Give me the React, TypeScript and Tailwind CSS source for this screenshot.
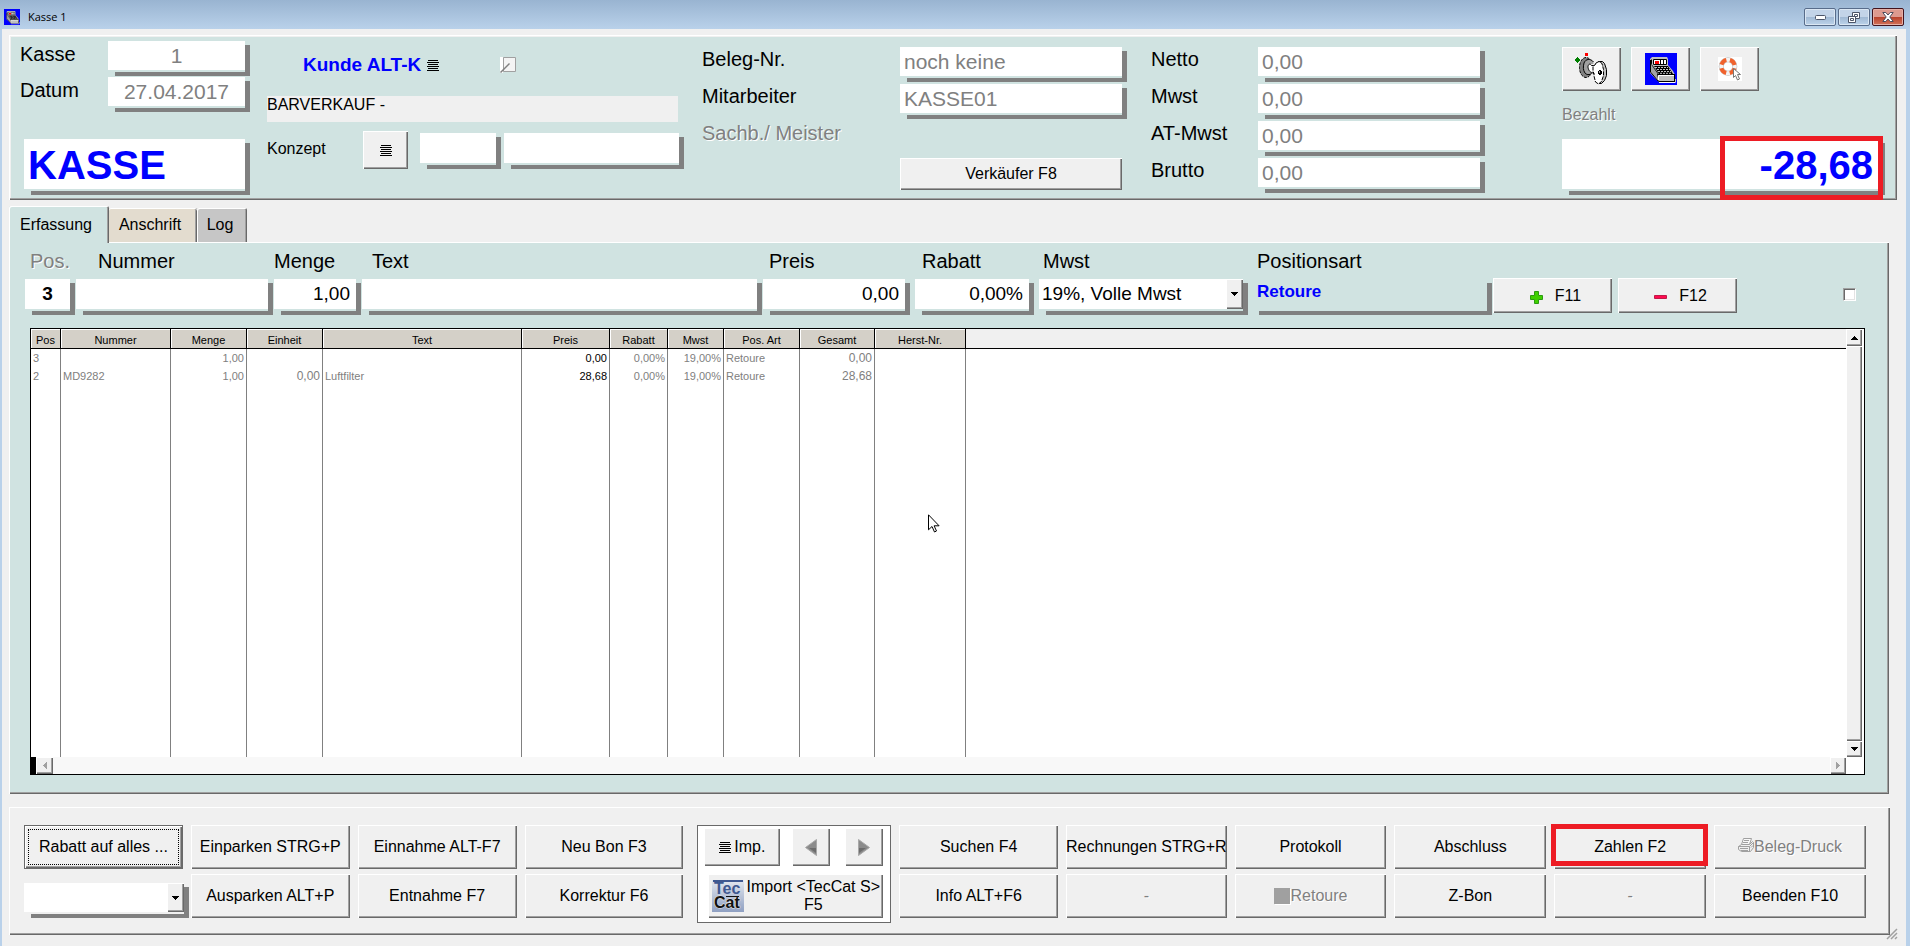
import { useState, type ButtonHTMLAttributes, type InputHTMLAttributes, type ReactNode } from 'react';
import clsx from 'clsx';

const BEVEL = 'shadow-[inset_1px_1px_#fff,inset_-1px_-1px_#696969,inset_-2px_-2px_#a0a0a0]';
const DISABLED_TEXT = 'text-[#808080] [text-shadow:1px_1px_#fff]';

function BevelButton({ className, children, disabled, ...rest }: ButtonHTMLAttributes<HTMLButtonElement>) {
    return (
        <button
            type="button"
            disabled={disabled}
            className={clsx(
                'flex items-center justify-center bg-[#f0f0f0] whitespace-nowrap',
                BEVEL,
                disabled && DISABLED_TEXT,
                className,
            )}
            {...rest}
        >
            {children}
        </button>
    );
}

// White box with the thick grey L-shaped shadow at its right and bottom edge
function ShadowBox({ className, children }: { className?: string; children: ReactNode }) {
    return (
        <div className={clsx('grid', className)}>
            <span className="col-start-1 row-start-1 ml-[7px] mt-1 border-r-[5px] border-b-4 border-[#808080]" />
            <div className="col-start-1 row-start-1 mr-[5px] mb-1.5 grid min-w-0">{children}</div>
        </div>
    );
}

interface FieldProps extends InputHTMLAttributes<HTMLInputElement> {
    boxClass?: string;
}

function Field({ boxClass, className, ...rest }: FieldProps) {
    return (
        <ShadowBox className={boxClass}>
            <input className={clsx('w-full min-w-0 leading-none outline-none', className)} {...rest} />
        </ShadowBox>
    );
}

interface DropDownProps {
    id: string;
    label?: string;
    value: string;
    options: string[];
    onChange: (value: string) => void;
    boxClass?: string;
}

function DropDown({ id, label, value, options, onChange, boxClass }: DropDownProps) {
    return (
        <ShadowBox className={boxClass}>
            <select
                id={id}
                aria-label={label}
                value={value}
                onChange={(e) => onChange(e.target.value)}
                className="col-start-1 row-start-1 w-full appearance-none bg-white pl-[3px] text-[19px] outline-none"
            >
                {options.map((option) => (
                    <option key={option}>{option}</option>
                ))}
            </select>
            <span
                className={clsx(
                    'pointer-events-none col-start-1 row-start-1 flex w-[17px] items-center justify-center justify-self-end bg-[#f0f0f0]',
                    BEVEL,
                )}
            >
                <Triangle dir="down" />
            </span>
        </ShadowBox>
    );
}

/* ---------- icons ---------- */

function Triangle({ dir, className = 'text-black' }: { dir: 'up' | 'down' | 'left' | 'right'; className?: string }) {
    const paths = {
        up: 'M3 0h1v1h1v1h1v1h1v1H0V3h1V2h1V1h1z',
        down: 'M0 0h7v1H6v1H5v1H4v1H3V3H2V2H1V1H0z',
        left: 'M4 0v7H3V6H2V5H1V4H0V3h1V2h1V1h1V0z',
        right: 'M0 0v7h1V6h1V5h1V4h1V3H3V2H2V1H1V0z',
    };
    const vertical = dir === 'up' || dir === 'down';
    return (
        <svg width={vertical ? 7 : 4} height={vertical ? 4 : 7} shapeRendering="crispEdges" className={className}>
            <path d={paths[dir]} fill="currentColor" />
        </svg>
    );
}

function LinesIcon() {
    return (
        <svg width="12" height="11" shapeRendering="crispEdges">
            <path d="M1 0h10v1H1zM0 2h12v1H0zM1 4h10v1H1zM0 6h12v1H0zM1 8h10v1H1zM0 10h12v1H0z" />
        </svg>
    );
}

function RegisterIcon({ size = 32 }: { size?: number }) {
    return (
        <svg width={size} height={size} viewBox="0 0 32 32">
            <path fill="#0000ff" d="M0 0h32v32H0z" />
            <path fill="#c0c0c0" d="M5 6l2-2h15l1 2v6l5 6 2 4v7H14l-9-9z" />
            <path fill="none" stroke="#000" d="M5.500 7v12l8 9.500M6.500 6.500v5l7 10" />
            <path fill="#808080" d="M6 10l7 11v6l-7-8z" opacity=".45" />
            <path fill="#fff" stroke="#000" d="M8.500 6.500h13v5h-13z" />
            <path fill="#f00" d="M10 8h4v3h-4z" />
            <path fill="none" stroke="#000" d="M15.500 7v4M18.500 7v4" />
            <path fill="#000" d="M9 13h14l5 8H14z" />
            <path
                fill="none"
                stroke="#c0c0c0"
                strokeDasharray="2 1"
                d="M10 14.500h13M12 16.500h13M13 18.500h13M15 20.300h12"
            />
            <path fill="#000" d="M12 21h18v8H14z" />
            <path fill="#c0c0c0" d="M13 22h16v6H14z" />
            <path fill="none" stroke="#fff" d="M13.500 27v-4.500H29M14 29.500h16.500" />
            <path fill="#c0c0c0" d="M30 26h1v3h-1z" />
        </svg>
    );
}

function PhoneIcon() {
    return (
        <svg width="33" height="32" viewBox="0 0 33 32">
            <path fill="#008000" d="M2 4h1v1h1v1h1v2H4v1H3v1H2V9H1V8H0V6h1V5h1z" />
            <path fill="#f00" d="M10 0h3v3h-3z" />
            <ellipse cx="11" cy="14.500" rx="6.500" ry="10" fill="#808080" stroke="#000" strokeDasharray="3 1" />
            <path fill="#a0a0a0" stroke="#000" d="M18.500 9c-3-4-8-3-9.500 1-1 4-1 7 1 10 2 2.500 6 2 8-1" />
            <path fill="#f0f0f0" d="M15 11h8v11h-5l-4-5z" />
            <path fill="#fff" stroke="#000" d="M19.500 12.500h-3c-1-2-3-2-3.500 1 0 3 2 6 4 6l2.500 1.500" />
            <path fill="#c0c0c0" stroke="#000" d="M23.500 8.500h4l2 2 2 6v6l-2 5-3 3h-3z" />
            <path fill="#fff" stroke="#000" strokeDasharray="4 1" d="M21 10l3-1.500 3 2 1.500 6v6l-2 6-3 2.500-3-2-1.500-6v-3l-1-1v-6l2-1z" />
            <path fill="#000" d="M24 17h2v1h1v3h-1v1h-2v-1h-1v-3h1z" />
            <path fill="#a0a0a0" d="M24 18h1v2h-1z" />
        </svg>
    );
}

function HelpIcon() {
    return (
        <svg width="24" height="24" viewBox="0 0 24 24">
            <path fill="#fff" d="M0 0h24v24H0z" />
            <circle cx="10" cy="9.500" r="6.800" fill="none" stroke="#b9b9b9" strokeWidth="5" />
            <circle cx="10" cy="9.500" r="6.800" fill="none" stroke="#f4f4f4" strokeWidth="4" />
            <circle
                cx="10"
                cy="9.500"
                r="6.800"
                fill="none"
                stroke="#f0622d"
                strokeWidth="4"
                strokeDasharray="7 3.680"
                strokeDashoffset="-1.800"
            />
            <path fill="#fff" stroke="#777" d="M15.500 11.500v9l2-2 2 4.500 2-1-2-4.500h3z" />
        </svg>
    );
}

function PrinterIcon() {
    return (
        <svg width="16" height="15" viewBox="0 0 16 15" fill="none" stroke="#a0a0a0" className="mb-1">
            <path fill="#f8f8f8" d="M3.500 6.500l2-6h8l-2 6z" />
            <path d="M6 2.500h5M5 4.500h5" />
            <path fill="#f0f0f0" d="M.5 8.500l3-2h8l3-3 1 1v5l-3 4H3.500l-3-2z" />
            <path d="M.5 8.500h11v5M11.500 8.500l4-4M2 10.500h8M3 12.500h7M13 9.500l2-2" />
        </svg>
    );
}

function TecCatLogo() {
    return (
        <svg width="32" height="32" viewBox="0 0 32 32" className="shrink-0">
            <defs>
                <linearGradient id="teccat" x1="0" y1="0" x2="0" y2="1">
                    <stop offset="0" stopColor="#e4e8ef" />
                    <stop offset="1" stopColor="#8fa0c2" />
                </linearGradient>
            </defs>
            <path fill="url(#teccat)" d="M0 0h32v32H0z" />
            <path fill="#3f5890" d="M1 0h30v2H1z" />
            <g fontFamily="Liberation Sans" fontWeight="bold" fontSize="16">
                <text x="2" y="14" fill="#3f5890">Tec</text>
                <text x="2" y="28" fill="#111" stroke="#e8e8e8" strokeWidth="1" paintOrder="stroke">Cat</text>
            </g>
            <path fill="#111" d="M14 16h13v1H14z" />
        </svg>
    );
}

function ArrowIcon({ dir }: { dir: 'left' | 'right' }) {
    return (
        <svg width="12" height="17" viewBox="0 0 12 17">
            <path
                fill="#8b8b8b"
                stroke="#a8a8a8"
                d={dir === 'left' ? 'M11.500 .5v16L.5 8.500z' : 'M.5 .5v16l11-8z'}
            />
            <path fill="#6c6c6c" d={dir === 'left' ? 'M11 9v5L4 9z' : 'M1 9v5l7-5z'} />
        </svg>
    );
}

/* ---------- window parts ---------- */

function TitleBar() {
    const glass =
        'flex h-[18px] w-8 items-center justify-center rounded-xs border border-[#586c8a] bg-[linear-gradient(#c3d4e8_50%,#9fb8d3_50%,#bdd3ea)] shadow-[inset_0_0_0_1px_#dbe7f3]';
    return (
        <header className="flex h-[29px] items-center bg-linear-to-b from-[#99b4d1] to-[#b9d1ea] pt-[5px] pr-1.5 pl-1">
            <RegisterIcon size={16} />
            <h1 className="ml-2 font-['Open_Sans',sans-serif] text-[11px]">Kasse 1</h1>
            <div className="ml-auto flex gap-0.5">
                <button type="button" aria-label="Minimieren" className={glass}>
                    <svg width="11" height="5">
                        <rect x=".5" y=".5" width="10" height="4" rx="1" fill="#fff" stroke="#4c5568" />
                    </svg>
                </button>
                <button type="button" aria-label="Verkleinern" className={glass}>
                    <svg width="12" height="11" fill="none">
                        <path fill="#fff" stroke="#4c5568" d="M4.500 .5h7v6h-7z" />
                        <path stroke="#4c5568" d="M6.500 2.500h3v2h-3z" />
                        <path fill="#fff" stroke="#4c5568" d="M.5 4.500h7v6h-7z" />
                        <path stroke="#4c5568" d="M2.500 6.500h3v2h-3z" />
                    </svg>
                </button>
                <button
                    type="button"
                    aria-label="Schließen"
                    className="flex h-[18px] w-8 items-center justify-center rounded-xs border border-[#43141d] bg-[linear-gradient(#dd9a8f_50%,#b8402a_50%,#d2735a)] shadow-[inset_0_0_0_1px_#e6b0a6]"
                >
                    <svg width="12" height="10" viewBox="0 0 12 10">
                        <path
                            fill="#fff"
                            stroke="#4c4c5c"
                            d="M.8 .5h3L6 3 8.200 .5h3L7.800 5l3.400 4.500h-3L6 7 3.800 9.500h-3L4.200 5z"
                        />
                    </svg>
                </button>
            </div>
        </header>
    );
}

const SUMS = [
    { id: 'netto', label: 'Netto' },
    { id: 'mwst-summe', label: 'Mwst' },
    { id: 'at-mwst', label: 'AT-Mwst' },
    { id: 'brutto', label: 'Brutto' },
];

const HEAD_LABEL = 'text-[20px] leading-[24px] whitespace-nowrap';
const HEAD_FIELD = 'bg-white text-[21px] text-[#808080]';
const BIG_FIELD = 'bg-white pt-0.5 text-[40px] font-bold text-[#0000ff]';

function HeadPanel() {
    return (
        <section className="flex items-start bg-[#d0e3e1] pt-1.5 pr-3 pb-[5px] pl-[11px] shadow-[inset_1px_1px_#fff,inset_-1px_-1px_#696969,inset_-2px_-2px_#a0a0a0,inset_2px_2px_#f0f0f0]">
            <div className="w-[230px] shrink-0">
                <div className="grid grid-cols-[88px_142px] gap-y-px">
                    <label htmlFor="kasse" className="text-[20px] leading-[27px]">Kasse</label>
                    <Field id="kasse" readOnly value="1" boxClass="h-[35px]" className={clsx(HEAD_FIELD, 'text-center')} />
                    <label htmlFor="datum" className="text-[20px] leading-[27px]">Datum</label>
                    <Field id="datum" readOnly value="27.04.2017" boxClass="h-[35px]" className={clsx(HEAD_FIELD, 'text-center')} />
                </div>
                <Field
                    aria-label="Modus"
                    readOnly
                    value="KASSE"
                    boxClass="mt-[27px] ml-1 h-14"
                    className={clsx(BIG_FIELD, 'pl-1')}
                />
            </div>

            <div className="ml-[17px] w-[417px] shrink-0 pt-[7px]">
                <div className="flex h-[34px] items-center pl-9">
                    <button type="button" className="flex items-center gap-1.5 text-[19px] font-bold text-[#0000ff]">
                        Kunde ALT-K
                        <span className="text-black"><LinesIcon /></span>
                    </button>
                    <button type="button" aria-label="Kunde bearbeiten" className="ml-[61px]">
                        <svg width="16" height="16">
                            <path fill="#fff" d="M0 0h3v16H0z" />
                            <path fill="#f4f4f4" stroke="#a0a0a0" d="M3.500 .5h12v14h-12z" />
                            <path stroke="#808080" strokeWidth="1.500" d="M.5 15.500l9-9" />
                        </svg>
                    </button>
                </div>
                <p className="mt-[14px] mr-1.5 h-[26px] bg-[#f0f0f0] text-[16px] leading-[18px]">BARVERKAUF -</p>
                <div className="mt-[9px] flex h-[38px] items-center">
                    <label htmlFor="konzept" className="w-24 pb-0.5 text-[16px]">Konzept</label>
                    <BevelButton aria-label="Konzept wählen" className="h-[38px] w-[45px]">
                        <LinesIcon />
                    </BevelButton>
                    <Field id="konzept" boxClass="ml-3 h-9 w-[81px] self-end" className="bg-white" />
                    <Field aria-label="Konzept Text" boxClass="ml-[3px] h-9 w-[180px] self-end" className="bg-white" />
                </div>
            </div>

            <div className="ml-[18px] grid shrink-0 grid-cols-[198px_227px] grid-rows-[35px_35px_35px_35px] gap-y-0.5 pt-1.5">
                <label htmlFor="beleg" className={HEAD_LABEL}>Beleg-Nr.</label>
                <Field id="beleg" readOnly value="noch keine" className={clsx(HEAD_FIELD, 'pl-1')} />
                <label htmlFor="mitarbeiter" className={HEAD_LABEL}>Mitarbeiter</label>
                <Field id="mitarbeiter" readOnly value="KASSE01" className={clsx(HEAD_FIELD, 'pl-1')} />
                <span className={clsx(HEAD_LABEL, DISABLED_TEXT)}>Sachb./ Meister</span>
                <BevelButton className="col-start-2 row-start-4 mr-[5px] h-8 text-[16px]">Verkäufer F8</BevelButton>
            </div>

            <div className="ml-6 grid shrink-0 grid-cols-[107px_227px] grid-rows-[35px_35px_35px_35px] gap-y-0.5 pt-1.5">
                {SUMS.map(({ id, label }) => (
                    <div key={id} className="contents">
                        <label htmlFor={id} className={HEAD_LABEL}>{label}</label>
                        <Field id={id} readOnly value="0,00" className={clsx(HEAD_FIELD, 'pl-1')} />
                    </div>
                ))}
            </div>

            <div className="ml-auto w-[323px] shrink-0 pt-1.5">
                <div className="flex gap-2.5">
                    <BevelButton aria-label="Telefon" className="h-11 w-[59px]"><PhoneIcon /></BevelButton>
                    <BevelButton aria-label="Kassenlade" className="h-11 w-[59px]"><RegisterIcon /></BevelButton>
                    <BevelButton aria-label="Hilfe" className="h-11 w-[59px]"><HelpIcon /></BevelButton>
                </div>
                <label htmlFor="bezahlt" className={clsx('mt-3 block h-9 text-[16px] leading-6', DISABLED_TEXT)}>
                    Bezahlt
                </label>
                <div className="relative">
                    <Field
                        id="bezahlt"
                        readOnly
                        value="-28,68"
                        boxClass="h-14"
                        className={clsx(BIG_FIELD, 'pr-[7px] text-right')}
                    />
                    <span className="pointer-events-none absolute -top-[3px] right-0.5 h-16 w-[163px] border-5 border-[#ed1c24]" />
                </div>
            </div>
        </section>
    );
}

function EntryRow() {
    const [mwst, setMwst] = useState('19%, Volle Mwst');
    const label = 'mb-[5px] text-[20px] leading-[26px]';
    const field = 'bg-white text-[19px]';

    return (
        <div className="flex items-end gap-px pr-[33px] pl-4">
            <div className="flex w-[50px] flex-col">
                <label htmlFor="pos" className={clsx(label, DISABLED_TEXT, 'pl-[5px]')}>Pos.</label>
                <Field id="pos" readOnly value="3" boxClass="h-9" className={clsx(field, 'text-center font-bold')} />
            </div>
            <div className="flex w-[197px] flex-col">
                <label htmlFor="nummer" className={clsx(label, 'pl-[22px]')}>Nummer</label>
                <Field id="nummer" boxClass="h-9" className={field} />
            </div>
            <div className="flex w-[87px] flex-col">
                <label htmlFor="menge" className={label}>Menge</label>
                <Field id="menge" defaultValue="1,00" boxClass="h-9" className={clsx(field, 'pr-[6px] text-right')} />
            </div>
            <div className="flex min-w-24 flex-1 flex-col">
                <label htmlFor="text" className={clsx(label, 'pl-2.5')}>Text</label>
                <Field id="text" boxClass="h-9" className={field} />
            </div>
            <div className="flex w-[147px] flex-col">
                <label htmlFor="preis" className={clsx(label, 'pl-1.5')}>Preis</label>
                <Field id="preis" defaultValue="0,00" boxClass="h-9" className={clsx(field, 'pr-[6px] text-right')} />
            </div>
            <div className="ml-1 flex w-[119px] flex-col">
                <label htmlFor="rabatt" className={clsx(label, 'pl-[7px]')}>Rabatt</label>
                <Field id="rabatt" defaultValue="0,00%" boxClass="h-9" className={clsx(field, 'pr-[6px] text-right')} />
            </div>
            <div className="ml-1 flex w-[209px] flex-col">
                <label htmlFor="mwst" className={clsx(label, 'pl-1')}>Mwst</label>
                <DropDown
                    id="mwst"
                    value={mwst}
                    onChange={setMwst}
                    options={['19%, Volle Mwst', '7%, Halbe Mwst', '0%, Keine Mwst']}
                    boxClass="h-9"
                />
            </div>
            <div className="ml-[3px] flex w-[240px] flex-col">
                <label htmlFor="positionsart" className={clsx(label, 'pl-[5px]')}>Positionsart</label>
                <Field
                    id="positionsart"
                    readOnly
                    value="Retoure"
                    boxClass="h-9"
                    className="h-[26px] bg-transparent pl-[5px] text-[17px] font-bold text-[#0000ff]"
                />
            </div>
            <BevelButton className="mb-0.5 h-[35px] w-[119px] gap-3 pl-1.5 text-[16px]">
                <svg width="13" height="13" className="mt-1">
                    <path fill="#3fd000" stroke="#2c9a12" d="M4.500 .5h4v4h4v4h-4v4h-4v-4h-4v-4h4z" />
                </svg>
                F11
            </BevelButton>
            <BevelButton className="mb-0.5 ml-[5px] h-[35px] w-[119px] gap-3 pl-1.5 text-[16px]">
                <svg width="13" height="5" className="mt-1">
                    <path fill="#ff0a50" stroke="#c01a48" d="M.5 .5h12v3H.5z" />
                </svg>
                F12
            </BevelButton>
            <input
                type="checkbox"
                aria-label="Position markieren"
                className="mb-[14px] ml-[105px] h-[13px] w-[13px] appearance-none border border-t-[#a0a0a0] border-r-white border-b-white border-l-[#a0a0a0] bg-white shadow-[inset_1px_1px_#696969,inset_-1px_-1px_#e3e3e3] checked:bg-[#808080]"
            />
        </div>
    );
}

const COLUMNS = [
    { name: 'Pos', width: 30 },
    { name: 'Nummer', width: 110 },
    { name: 'Menge', width: 76, cell: 'text-right' },
    { name: 'Einheit', width: 76, cell: 'text-right text-[12px]' },
    { name: 'Text', width: 199 },
    { name: 'Preis', width: 88, cell: 'text-right text-black' },
    { name: 'Rabatt', width: 58, cell: 'text-right' },
    { name: 'Mwst', width: 56, cell: 'text-right' },
    { name: 'Pos. Art', width: 76 },
    { name: 'Gesamt', width: 75, cell: 'text-right text-[12px]' },
    { name: 'Herst-Nr.', width: 91 },
];

const ROWS = [
    ['3', '', '1,00', '', '', '0,00', '0,00%', '19,00%', 'Retoure', '0,00', ''],
    ['2', 'MD9282', '1,00', '0,00', 'Luftfilter', '28,68', '0,00%', '19,00%', 'Retoure', '28,68', ''],
];

function PositionTable() {
    return (
        <div className="relative mt-[13px] mr-6 ml-[21px] flex min-h-0 flex-1 flex-col border border-black bg-white">
            <div className="flex min-h-0 flex-1">
                <div className="min-w-0 flex-1">
                    <table className="h-full w-full table-fixed border-separate border-spacing-0 text-[11px] text-[#808080]">
                        <colgroup>
                            {COLUMNS.map((col) => (
                                <col key={col.name} style={{ width: col.width }} />
                            ))}
                            <col />
                        </colgroup>
                        <thead>
                            <tr className="h-5">
                                {COLUMNS.map((col) => (
                                    <th
                                        key={col.name}
                                        className="h-5 border-r border-b border-black bg-[#d4d0c8] px-0 pt-0.5 pb-0 text-center leading-4 font-normal text-black shadow-[inset_1px_1px_#fff]"
                                    >
                                        {col.name}
                                    </th>
                                ))}
                                <th className="h-5 border-b border-black bg-[#f0f0f0] p-0" />
                            </tr>
                        </thead>
                        <tbody>
                            {ROWS.map((row) => (
                                <tr key={row[0]} className="h-[18px]">
                                    {row.map((value, i) => (
                                        <td
                                            key={COLUMNS[i].name}
                                            className={clsx('h-[18px] border-r border-[#808080] px-0.5 py-0 leading-[18px]', COLUMNS[i].cell)}
                                        >
                                            {value}
                                        </td>
                                    ))}
                                    <td />
                                </tr>
                            ))}
                            <tr>
                                {COLUMNS.map((col) => (
                                    <td key={col.name} className="border-r border-[#808080] p-0" />
                                ))}
                                <td />
                            </tr>
                        </tbody>
                    </table>
                </div>
                <div className="mr-0.5 flex w-4 flex-col">
                    <BevelButton aria-label="Nach oben" className="h-[17px]"><Triangle dir="up" /></BevelButton>
                    <span className={clsx('flex-1 bg-[#f0f0f0]', BEVEL)} />
                    <BevelButton aria-label="Nach unten" className="h-4"><Triangle dir="down" /></BevelButton>
                </div>
            </div>
            <div className="flex h-[17px] pr-[18px]">
                <span className="w-[5px] bg-black" />
                <BevelButton aria-label="Nach links" className="w-[17px]">
                    <Triangle dir="left" className="text-[#a0a0a0]" />
                </BevelButton>
                <span className="flex-1 bg-[#f8f8f8]" />
                <BevelButton aria-label="Nach rechts" className="w-4">
                    <Triangle dir="right" className="text-[#a0a0a0]" />
                </BevelButton>
            </div>

            {/* mouse pointer */}
            <svg width="12" height="19" viewBox="0 0 12 19" className="absolute top-[185px] left-[897px]">
                <path fill="#fff" stroke="#000" d="M.5 .8v15l3.500-3.300 2.500 5.500 2-1-2.400-5.200h5z" />
            </svg>
        </div>
    );
}

function ImportBox() {
    return (
        <div className="row-span-2 ml-1.5 flex h-[98px] flex-col border border-[#696969] bg-white pt-0.5 pr-[7px] pl-1.5">
            <div className="flex gap-3">
                <BevelButton className="h-[38px] w-[76px] gap-[3px]"><LinesIcon />Imp.</BevelButton>
                <BevelButton aria-label="Zurück" className="h-[38px] w-[38px]"><ArrowIcon dir="left" /></BevelButton>
                <BevelButton aria-label="Weiter" className="ml-auto h-[38px] w-[38px]"><ArrowIcon dir="right" /></BevelButton>
            </div>
            <BevelButton className="mt-2 ml-1 h-11 gap-[3px] leading-[18px]">
                <TecCatLogo />
                <span>Import &lt;TecCat S&gt;<br />F5</span>
            </BevelButton>
        </div>
    );
}

function ActionPanel() {
    const [discount, setDiscount] = useState('');

    return (
        <section
            className={clsx(
                'mt-[13px] mr-[7px] grid h-32 content-start gap-x-2 gap-y-[5px] pt-[18px] pr-6 pl-[15px] text-[16px]',
                'grid-cols-[159fr_159fr_159fr_159fr_200fr_159fr_159fr_152fr_152fr_152fr_152fr] grid-rows-[44px_44px]',
                BEVEL,
            )}
        >
            <button
                type="button"
                className="border border-[#696969] bg-[#f0f0f0] p-[3px] shadow-[inset_1px_1px_#fff,inset_-1px_-1px_#696969,inset_-2px_-2px_#a0a0a0]"
            >
                <span className="flex h-full items-center justify-center border border-dotted border-black">
                    Rabatt auf alles ...
                </span>
            </button>
            <BevelButton>Einparken STRG+P</BevelButton>
            <BevelButton>Einnahme ALT-F7</BevelButton>
            <BevelButton>Neu Bon F3</BevelButton>
            <ImportBox />
            <BevelButton>Suchen F4</BevelButton>
            <BevelButton>Rechnungen STRG+R</BevelButton>
            <BevelButton>Protokoll</BevelButton>
            <BevelButton>Abschluss</BevelButton>
            <div className="relative grid">
                <BevelButton>Zahlen F2</BevelButton>
                <span className="pointer-events-none absolute -top-px -right-0.5 -left-[3px] h-[42px] border-5 border-[#ed1c24]" />
            </div>
            <BevelButton disabled><PrinterIcon />Beleg-Druck</BevelButton>

            <DropDown
                id="rabattart"
                label="Rabattart"
                value={discount}
                onChange={setDiscount}
                options={['', '5%', '10%']}
                boxClass="-mr-1.5 h-[35px] self-end"
            />
            <BevelButton>Ausparken ALT+P</BevelButton>
            <BevelButton>Entnahme F7</BevelButton>
            <BevelButton>Korrektur F6</BevelButton>
            <BevelButton>Info ALT+F6</BevelButton>
            <BevelButton disabled>-</BevelButton>
            <BevelButton disabled>
                <span className="mr-px h-4 w-4 bg-[#a0a0a0] shadow-[1px_1px_#fff]" />
                Retoure
            </BevelButton>
            <BevelButton>Z-Bon</BevelButton>
            <BevelButton disabled>-</BevelButton>
            <BevelButton>Beenden F10</BevelButton>
        </section>
    );
}

export default function App() {
    return (
        <div className="flex h-screen min-h-[640px] flex-col bg-[#b9d1ea] font-['Liberation_Sans',Arial,sans-serif] text-black">
            <TitleBar />
            <main className="relative mr-1 ml-0.5 flex min-h-0 flex-1 flex-col bg-[#f0f0f0] pt-1.5 pr-[9px] pb-[11px] pl-[7px]">
                <HeadPanel />

                <div role="tablist" className="mt-1.5 flex h-9 items-end text-[16px]">
                    <button
                        type="button"
                        role="tab"
                        aria-selected="true"
                        className="z-10 -mb-px h-[37px] w-[100px] rounded-t-xs bg-[#d0e3e1] pr-1.5 shadow-[inset_1px_1px_#fff,inset_-1px_0_#696969,inset_-2px_0_#a0a0a0]"
                    >
                        Erfassung
                    </button>
                    <button
                        type="button"
                        role="tab"
                        aria-selected="false"
                        className="h-[34px] w-[88px] rounded-t-xs bg-[#e3dccf] pr-1.5 shadow-[inset_0_1px_#fff,inset_-1px_0_#696969,inset_-2px_0_#a0a0a0]"
                    >
                        Anschrift
                    </button>
                    <button
                        type="button"
                        role="tab"
                        aria-selected="false"
                        className="h-[34px] w-[50px] rounded-t-xs bg-[#c6c6c6] pr-1 shadow-[inset_1px_1px_#fff,inset_-1px_0_#696969,inset_-2px_0_#a0a0a0]"
                    >
                        Log
                    </button>
                </div>

                <section role="tabpanel" className={clsx('mr-2 flex min-h-0 flex-1 flex-col bg-[#d0e3e1] pt-1.5 pb-[19px]', BEVEL)}>
                    <EntryRow />
                    <PositionTable />
                </section>

                <ActionPanel />

                {/* resize grip */}
                <svg width="12" height="12" className="absolute right-2 bottom-1.5" stroke="#a0a0a0" strokeWidth="1.500">
                    <path d="M1 11L11 1M5 11l6-6M9 11l2-2" />
                </svg>
            </main>
        </div>
    );
}
